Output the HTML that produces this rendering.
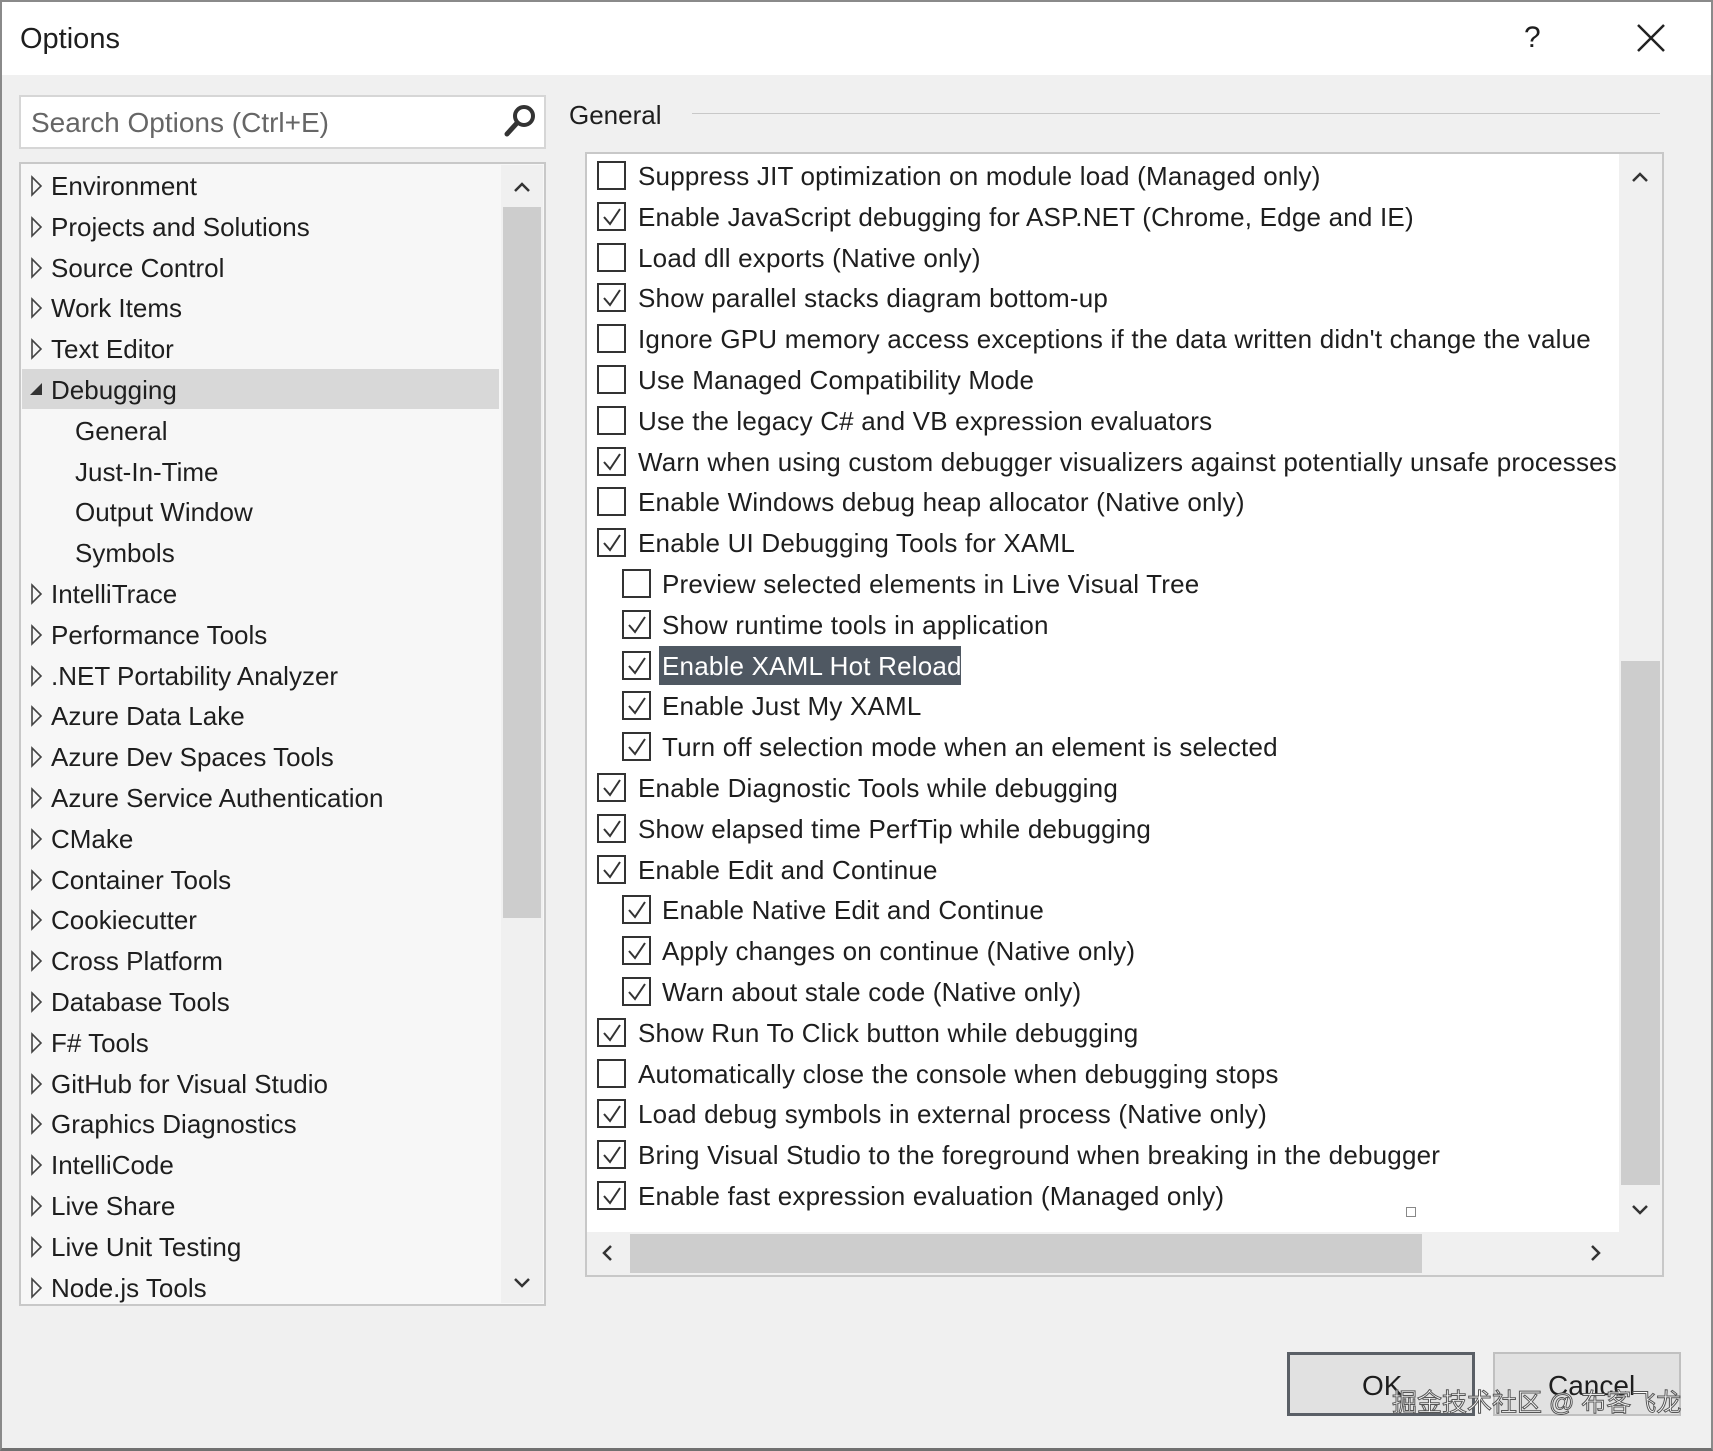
<!DOCTYPE html>
<html><head><meta charset="utf-8"><style>
*{margin:0;padding:0;box-sizing:border-box}
body{width:1713px;height:1451px;background:#f0f0f0;font-family:"Liberation Sans","Noto Sans CJK SC",sans-serif;color:#1e1e1e;position:relative;overflow:hidden}
.abs{position:absolute}
.frame{left:0;top:0;width:1713px;height:1451px;border:2px solid #8a8a8a;border-bottom:3px solid #707070}
.title{left:2px;top:2px;width:1709px;height:73px;background:#fff}
.t{position:absolute;white-space:nowrap;font-size:26px;line-height:40px}
.cb{position:absolute;width:29px;height:29px;border:2px solid #333;background:#fff}
.cb svg{position:absolute;left:2px;top:2px}
</style></head><body>
<div class="abs frame"></div>
<div class="abs title"></div>
<div class="t" style="left:20px;top:19px;font-size:29px">Options</div>
<div class="t" style="left:1524px;top:18px;font-size:30px">?</div>
<svg class="abs" style="left:1636px;top:23px" width="30" height="30"><path d="M2 2L28 28M28 2L2 28" stroke="#222" stroke-width="2.5"/></svg>

<div class="abs" style="left:19px;top:95px;width:527px;height:54px;background:#fff;border:2px solid #d6d6d6"></div>
<div class="t" style="left:31px;top:103px;font-size:28px;color:#666">Search Options (Ctrl+E)</div>
<svg class="abs" style="left:502px;top:103px" width="36" height="36"><circle cx="22" cy="13" r="9" stroke="#333" stroke-width="4" fill="none"/><path d="M15 20L5 31" stroke="#333" stroke-width="5" stroke-linecap="round"/></svg>

<div class="abs" style="left:19px;top:162px;width:527px;height:1144px;background:#f7f7f7;border:2px solid #c8c8c8"></div>
<div class="abs" style="left:22px;top:369px;width:477px;height:40px;background:#d8d8d8"></div>
<div class="abs" style="left:501px;top:165px;width:42px;height:1138px;background:#f0f0f0"></div>
<div class="abs" style="left:503px;top:207px;width:38px;height:711px;background:#cdcdcd"></div>
<svg class="abs" style="left:512px;top:178px" width="20" height="20"><path d="M3 13L10 6L17 13" stroke="#333" stroke-width="2.5" fill="none"/></svg>
<svg class="abs" style="left:512px;top:1273px" width="20" height="20"><path d="M3 6L10 13L17 6" stroke="#333" stroke-width="2.5" fill="none"/></svg>
<div id="tree"></div>

<div class="t" style="left:569px;top:95px;font-size:26px">General</div>
<div class="abs" style="left:692px;top:113px;width:968px;height:1px;background:#c8c8c8"></div>
<div class="abs" style="left:585px;top:152px;width:1079px;height:1125px;background:#fff;border:2px solid #c8c8c8"></div>
<div class="abs" style="left:1619px;top:154px;width:43px;height:1078px;background:#f0f0f0"></div>
<div class="abs" style="left:1621px;top:661px;width:39px;height:524px;background:#cdcdcd"></div>
<div class="abs" style="left:587px;top:1232px;width:1075px;height:43px;background:#f0f0f0"></div>
<div class="abs" style="left:630px;top:1234px;width:792px;height:39px;background:#cdcdcd"></div>
<svg class="abs" style="left:1630px;top:168px" width="20" height="20"><path d="M3 13L10 6L17 13" stroke="#333" stroke-width="2.5" fill="none"/></svg>
<svg class="abs" style="left:1630px;top:1200px" width="20" height="20"><path d="M3 6L10 13L17 6" stroke="#333" stroke-width="2.5" fill="none"/></svg>
<svg class="abs" style="left:598px;top:1243px" width="20" height="20"><path d="M13 3L6 10L13 17" stroke="#333" stroke-width="2.5" fill="none"/></svg>
<svg class="abs" style="left:1585px;top:1243px" width="20" height="20"><path d="M7 3L14 10L7 17" stroke="#333" stroke-width="2.5" fill="none"/></svg>
<div class="abs" style="left:1406px;top:1207px;width:10px;height:10px;border:1.5px solid #888"></div>
<div class="abs" style="left:659px;top:646px;width:302px;height:39px;background:#4f5862"></div>
<div id="opts"></div>

<div class="abs" style="left:1287px;top:1352px;width:188px;height:64px;background:#e1e1e1;border:3px solid #5a5f66"></div>
<div class="t" style="left:1362px;top:1366px;font-size:28px">OK</div>
<div class="abs" style="left:1493px;top:1352px;width:188px;height:64px;background:#e1e1e1;border:2px solid #c0c0c0"></div>
<div class="t" style="left:1548px;top:1366px;font-size:28px">Cancel</div>
<div class="t" style="left:1392px;top:1383px;font-size:25px;color:#fff;-webkit-text-stroke:1px #555">掘金技术社区 @ 布客飞龙</div>

<script>
var tree=[["Environment",0],["Projects and Solutions",0],["Source Control",0],["Work Items",0],["Text Editor",0],["Debugging",2],["General",1],["Just-In-Time",1],["Output Window",1],["Symbols",1],["IntelliTrace",0],["Performance Tools",0],[".NET Portability Analyzer",0],["Azure Data Lake",0],["Azure Dev Spaces Tools",0],["Azure Service Authentication",0],["CMake",0],["Container Tools",0],["Cookiecutter",0],["Cross Platform",0],["Database Tools",0],["F# Tools",0],["GitHub for Visual Studio",0],["Graphics Diagnostics",0],["IntelliCode",0],["Live Share",0],["Live Unit Testing",0],["Node.js Tools",0]];
var h="";
tree.forEach(function(r,i){var y=186+i*40.8;
 if(r[1]==0)h+='<svg class="abs" style="left:30px;top:'+(y-11)+'px" width="14" height="22"><path d="M2 2L11 11L2 20Z" stroke="#444" stroke-width="1.6" fill="none"/></svg>';
 if(r[1]==2)h+='<svg class="abs" style="left:28px;top:'+(y-9)+'px" width="16" height="16"><path d="M14 2L14 14L2 14Z" fill="#333"/></svg>';
 h+='<div class="t" style="left:'+(r[1]==1?75:51)+'px;top:'+(y-20)+'px">'+r[0]+'</div>';});
document.getElementById("tree").innerHTML=h;
var o=[["Suppress JIT optimization on module load (Managed only)",0,0],["Enable JavaScript debugging for ASP.NET (Chrome, Edge and IE)",1,0],["Load dll exports (Native only)",0,0],["Show parallel stacks diagram bottom-up",1,0],["Ignore GPU memory access exceptions if the data written didn't change the value",0,0],["Use Managed Compatibility Mode",0,0],["Use the legacy C# and VB expression evaluators",0,0],["Warn when using custom debugger visualizers against potentially unsafe processes",1,0],["Enable Windows debug heap allocator (Native only)",0,0],["Enable UI Debugging Tools for XAML",1,0],["Preview selected elements in Live Visual Tree",0,1],["Show runtime tools in application",1,1],["Enable XAML Hot Reload",1,1],["Enable Just My XAML",1,1],["Turn off selection mode when an element is selected",1,1],["Enable Diagnostic Tools while debugging",1,0],["Show elapsed time PerfTip while debugging",1,0],["Enable Edit and Continue",1,0],["Enable Native Edit and Continue",1,1],["Apply changes on continue (Native only)",1,1],["Warn about stale code (Native only)",1,1],["Show Run To Click button while debugging",1,0],["Automatically close the console when debugging stops",0,0],["Load debug symbols in external process (Native only)",1,0],["Bring Visual Studio to the foreground when breaking in the debugger",1,0],["Enable fast expression evaluation (Managed only)",1,0]];
h="";
o.forEach(function(r,i){var y=176+i*40.8;var cx=r[2]?622:597,tx=r[2]?662:638;
 h+='<div class="cb" style="left:'+cx+'px;top:'+(y-15)+'px">'+(r[1]?'<svg width="22" height="22"><path d="M3 11L9 18L19 3" stroke="#333" stroke-width="2" fill="none"/></svg>':'')+'</div>';
 h+='<div class="t" style="left:'+tx+'px;top:'+(y-20)+'px;letter-spacing:0.2px;'+(i==12?'color:#fff;':'')+'">'+r[0]+'</div>';});
document.getElementById("opts").innerHTML=h;
</script>
</body></html>
